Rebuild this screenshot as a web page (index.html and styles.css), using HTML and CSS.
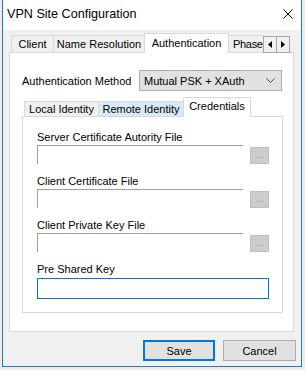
FILE: index.html
```html
<!DOCTYPE html>
<html lang="en">
<head>
  <meta charset="UTF-8" />
  <title>VPN Site Configuration</title>
  <link rel="stylesheet" href="styles.css">
</head>
<body>
  <div class="window">
    <div class="titlebar">
      <span class="title">VPN Site Configuration</span>
      <svg class="close" width="10" height="10" viewBox="0 0 10 10">
        <path d="M0.5 0.5 L9.5 9.5 M9.5 0.5 L0.5 9.5" stroke="#000" stroke-width="1" />
      </svg>
    </div>

    <div class="client">
      <div class="tabs">
        <div class="tab tab-client">Client</div>
        <div class="tab tab-name">Name Resolution</div>
        <div class="tab tab-auth active">Authentication</div>
        <div class="tab tab-phase">Phase</div>
        <div class="scroll-btn">
          <svg width="4" height="7" viewBox="0 0 4 7"><path d="M4 0 L0 3.5 L4 7 Z" fill="#000" /></svg>
        </div>
        <div class="scroll-btn">
          <svg width="4" height="7" viewBox="0 0 4 7"><path d="M0 0 L4 3.5 L0 7 Z" fill="#000" /></svg>
        </div>
      </div>

      <div class="panel">
        <div class="method-row">
          <span class="label">Authentication Method</span>
          <div class="select">
            <span>Mutual PSK + XAuth</span>
            <svg width="9" height="5" viewBox="0 0 9 5">
              <path d="M0.5 0.5 L4.5 4.5 L8.5 0.5" fill="none" stroke="#444" stroke-width="1" />
            </svg>
          </div>
        </div>

        <div class="tabs inner-tabs">
          <div class="tab tab-local">Local Identity</div>
          <div class="tab tab-remote">Remote Identity</div>
          <div class="tab tab-cred active">Credentials</div>
        </div>

        <div class="inner-panel">
          <div class="field">
            <span class="label">Server Certificate Autority File</span>
            <div class="file-row">
              <div class="file-input"></div>
              <div class="browse">...</div>
            </div>
          </div>
          <div class="field">
            <span class="label">Client Certificate File</span>
            <div class="file-row">
              <div class="file-input"></div>
              <div class="browse">...</div>
            </div>
          </div>
          <div class="field">
            <span class="label">Client Private Key File</span>
            <div class="file-row">
              <div class="file-input"></div>
              <div class="browse">...</div>
            </div>
          </div>
          <div class="field">
            <span class="label">Pre Shared Key</span>
            <div class="psk-input"></div>
          </div>
        </div>
      </div>

      <div class="buttons">
        <button class="btn btn-save">Save</button>
        <button class="btn">Cancel</button>
      </div>
    </div>
  </div>
</body>
</html>
```

FILE: styles.css
```css
* {
  box-sizing: border-box;
}

body {
  margin: 0;
  background-color: #ececec;
  font-family: 'Liberation Sans', Arial, sans-serif;
  font-size: 11px;
  color: #000;
}

.window {
  margin-left: 2px;
  width: 300px;
  height: 367px;
  background-color: #f0f0f0;
  border: 1px solid #1a7fd4;
  border-top: none;
}

.titlebar {
  height: 30px;
  background-color: white;
  display: flex;
  align-items: center;
  justify-content: space-between;
  padding: 0 8px 2px 4px;
}

.title {
  font-size: 12.6px;
}

.client {
  padding: 3px 7px 0 6px;
}

/* tabs */
.tabs {
  display: flex;
  align-items: flex-end;
  height: 19px;
  padding-left: 2px;
}

.tab {
  position: relative;
  height: 17px;
  line-height: 16px;
  text-align: center;
  white-space: nowrap;
  overflow: hidden;
  background-color: #f0f0f0;
  border: 1px solid #d9d9d9;
  border-bottom: none;
  margin-left: -1px;
}

.tab:first-child {
  margin-left: 0;
}

.tab.active {
  height: 20px;
  line-height: 18px;
  margin-bottom: -1px;
  background-color: white;
  z-index: 1;
}

.tab-client { width: 43px; }
.tab-name { width: 92px; }
.tab-auth { width: 85px; }
.tab-phase {
  width: 36px;
  text-align: left;
  padding-left: 4px;
  letter-spacing: -0.3px;
}

.scroll-btn {
  width: 14px;
  height: 17px;
  margin-left: -1px;
  margin-bottom: -1px;
  background-color: #f0f0f0;
  border: 1px solid #a8a8a8;
  display: flex;
  align-items: center;
  justify-content: center;
  position: relative;
  z-index: 2;
}

.scroll-btn:first-of-type {
  margin-left: 0;
}

.panel {
  height: 280px;
  background-color: white;
  border: 1px solid #d9d9d9;
  padding: 17px 10px 0 12px;
}

.method-row {
  display: flex;
  align-items: center;
  justify-content: space-between;
  padding-right: 1px;
}

.select {
  width: 143px;
  height: 21px;
  background-color: #e1e1e1;
  border: 1px solid #adadad;
  display: flex;
  align-items: center;
  justify-content: space-between;
  padding: 0 6px 0 4px;
}

.inner-tabs {
  margin-top: 6px;
}

.inner-tabs .tab {
  height: 15px;
  line-height: 14px;
}

.inner-tabs .tab.active {
  height: 20px;
  line-height: 17px;
}

.tab-local { width: 75px; }
.tab-remote {
  width: 86px;
  background-color: #d8eaf9;
}
.tab-cred { width: 68px; }

.inner-panel {
  height: 197px;
  border: 1px solid #d9d9d9;
  padding: 13px 0 0 14px;
  display: flex;
  flex-direction: column;
  gap: 10px;
}

.field {
  display: flex;
  flex-direction: column;
  gap: 1px;
}

.field .label {
  line-height: 14px;
}

.file-row {
  display: flex;
  align-items: flex-end;
  gap: 7px;
}

.file-input {
  width: 206px;
  height: 19px;
  background-color: white;
  border-top: 1px solid #a0a0a0;
  border-left: 1px solid #a0a0a0;
}

.browse {
  width: 19px;
  height: 17px;
  background-color: #cccccc;
  border: 1px solid #bfbfbf;
  color: #8a8a8a;
  font-size: 9px;
  line-height: 15px;
  text-align: center;
}

.psk-input {
  width: 232px;
  height: 21px;
  margin-top: 1px;
  border: 1px solid #0078d7;
}

/* bottom buttons */
.buttons {
  display: flex;
  justify-content: flex-end;
  gap: 8px;
  margin-top: 8px;
  margin-right: -2px;
}

.btn {
  width: 73px;
  height: 21px;
  padding: 0;
  font-family: inherit;
  font-size: 11px;
  color: #000;
  background-color: #e1e1e1;
  border: 1px solid #adadad;
}

.btn-save {
  width: 72px;
  border: 2px solid #0078d7;
}
```
